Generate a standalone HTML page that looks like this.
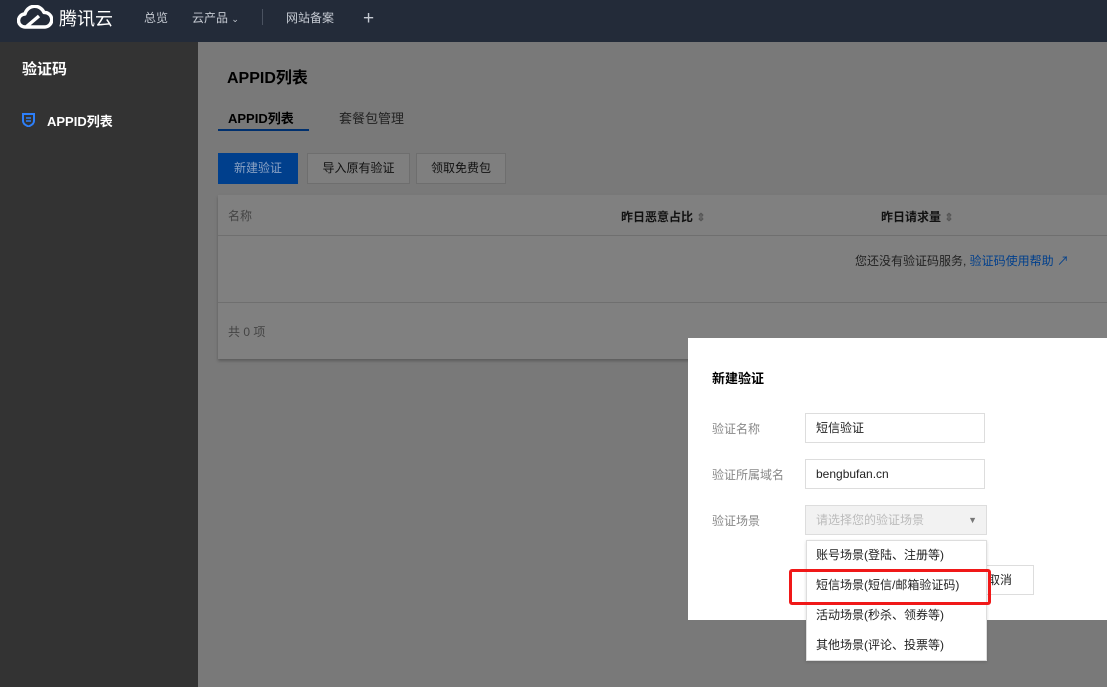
<!DOCTYPE html>
<html><head><meta charset="utf-8"><style>
*{margin:0;padding:0;box-sizing:border-box}
body{width:1107px;height:687px;overflow:hidden;background:#797979;font-family:"Liberation Sans","Noto Sans CJK SC",sans-serif;font-size:12px;position:relative;color:#000;line-height:1}
.abs{position:absolute}
.hdr{left:0;top:0;width:1107px;height:42px;background:#232b39}
.hdr span{position:absolute;color:#c5cad2;font-size:12px;top:12px}
.side{left:0;top:42px;width:198px;height:645px;background:#333}
.btn{position:absolute;top:153px;height:31px;line-height:29px;text-align:center;border:1px solid #6e6e6e;background:#7f7f7f;color:#111;font-size:12px}
.tbl{left:218px;top:195px;width:889px;height:164px;background:#808080;box-shadow:0 2px 3px rgba(0,0,0,.25)}
.dlg{left:688px;top:338px;width:419px;height:282px;background:#fff}
.lbl{position:absolute;color:#888;font-size:12px}
.inp{position:absolute;left:805px;width:180px;height:30px;border:1px solid #ddd;padding-left:10px;line-height:28px;font-size:12px;color:#222;background:#fff}
.menu{left:806px;top:540px;width:181px;height:121px;background:#fff;border:1px solid #ddd;box-shadow:0 1px 3px rgba(0,0,0,.15)}
.menu div{height:30px;line-height:29px;padding-left:9px;font-size:12px;color:#222}
</style></head><body>
<div class="abs hdr">
<svg class="abs" style="left:17px;top:5px" width="36" height="25" viewBox="0 0 36 25"><path d="M8 22 a6.5 6.5 0 0 1 0-13 a10 10 0 0 1 19-1.5 a7 7 0 0 1 1 14.5 Z M9 22 L22 11" fill="none" stroke="#fff" stroke-width="3.4" stroke-linejoin="round"/></svg>
<span style="left:59px;top:10px;font-size:18px;color:#fff">腾讯云</span>
<span style="left:144px">总览</span>
<span style="left:192px">云产品 <small style="font-size:9px">⌄</small></span>
<div class="abs" style="left:262px;top:9px;width:1px;height:16px;background:#4a5260"></div>
<span style="left:286px">网站备案</span>
<span style="left:363px;top:9px;font-size:19px">+</span>
</div>
<div class="abs side">
<div class="abs" style="left:22px;top:20px;color:#fff;font-size:15px;font-weight:bold">验证码</div>
<svg class="abs" style="left:22px;top:71px" width="13" height="14" viewBox="0 0 13 14"><path d="M1 1h11v7c0 3-3 4.5-5.5 5.5C4 12.5 1 11 1 8z" fill="none" stroke="#2d7ff9" stroke-width="2"/><path d="M4 5h5M4 8h5" stroke="#2d7ff9" stroke-width="1.5"/></svg>
<div class="abs" style="left:47px;top:73px;color:#fff;font-size:13px;font-weight:bold">APPID列表</div>
</div>
<div class="abs" style="left:227px;top:71px;font-size:16px;color:#000;font-weight:bold">APPID列表</div>
<div class="abs" style="left:228px;top:112px;font-size:13px;font-weight:bold;color:#000">APPID列表</div>
<div class="abs" style="left:218px;top:129px;width:91px;height:2px;background:#00306e"></div>
<div class="abs" style="left:339px;top:112px;font-size:13px;color:#222">套餐包管理</div>
<div class="btn" style="left:218px;width:80px;background:#003f8c;border-color:#003f8c;color:#8aa2c4">新建验证</div>
<div class="btn" style="left:307px;width:103px">导入原有验证</div>
<div class="btn" style="left:416px;width:90px">领取免费包</div>
<div class="abs tbl">
<div class="abs" style="left:10px;top:15px;color:#444">名称</div>
<div class="abs" style="left:403px;top:16px;color:#111;font-weight:bold">昨日恶意占比 <span style="color:#555;font-size:11px">⇕</span></div>
<div class="abs" style="left:663px;top:16px;color:#111;font-weight:bold">昨日请求量 <span style="color:#555;font-size:11px">⇕</span></div>
<div class="abs" style="left:0;top:40px;width:889px;height:1px;background:#6f6f6f"></div>
<div class="abs" style="left:637px;top:60px;color:#222">您还没有验证码服务, <span style="color:#003f8c">验证码使用帮助 ↗</span></div>
<div class="abs" style="left:0;top:107px;width:889px;height:1px;background:#6f6f6f"></div>
<div class="abs" style="left:10px;top:131px;color:#444">共 0 项</div>
</div>
<div class="abs dlg"></div>
<div class="abs" style="left:712px;top:372px;font-size:13px;font-weight:bold;color:#000">新建验证</div>
<div class="lbl" style="left:712px;top:423px">验证名称</div>
<div class="lbl" style="left:712px;top:469px">验证所属域名</div>
<div class="lbl" style="left:712px;top:515px">验证场景</div>
<div class="inp" style="top:413px">短信验证</div>
<div class="inp" style="top:459px">bengbufan.cn</div>
<div class="inp" style="top:505px;width:182px;background:#f2f2f2;color:#bbb">请选择您的验证场景<span style="position:absolute;right:9px;top:0;color:#777;font-size:9px">▼</span></div>
<div class="abs" style="left:940px;top:565px;width:94px;height:30px;border:1px solid #ddd;line-height:28px;padding-left:47px;color:#222">取消</div>
<div class="abs menu"><div>账号场景(登陆、注册等)</div><div>短信场景(短信/邮箱验证码)</div><div>活动场景(秒杀、领券等)</div><div>其他场景(评论、投票等)</div></div>
<div class="abs" style="left:789px;top:569px;width:202px;height:36px;border:3px solid #f01818;border-radius:3px"></div>
</body></html>
